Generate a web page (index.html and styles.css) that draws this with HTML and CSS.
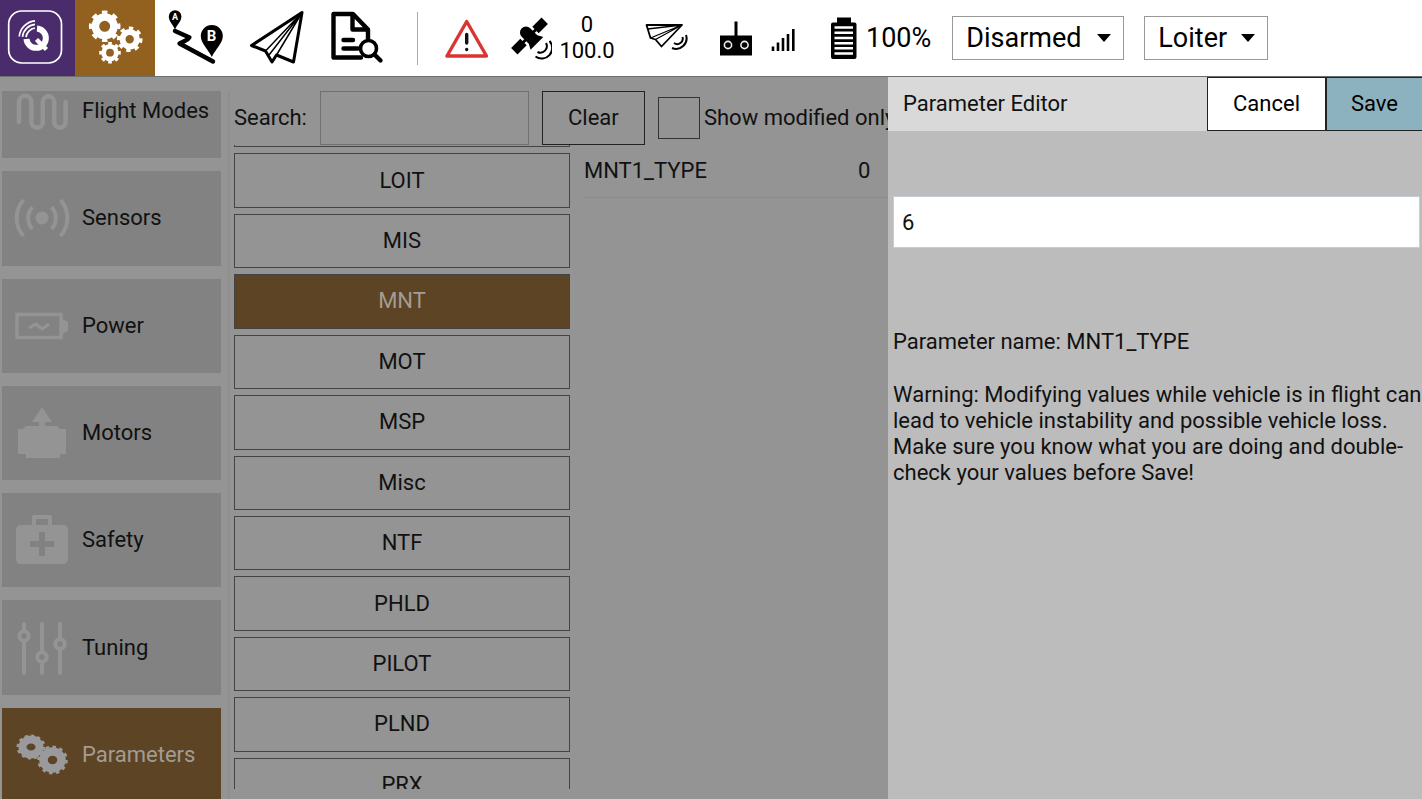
FILE: index.html
```html
<!DOCTYPE html>
<html lang="en">
<head>
    <meta charset="UTF-8">
    <meta name="viewport" content="width=device-width, initial-scale=1.0">
    <title>Vehicle Setup - Parameters</title>
    <link rel="stylesheet" href="styles.css">
</head>
<body>
<header class="toolbar">
    <button class="tool tool-logo" aria-label="Application menu">
        <svg width="75" height="76" viewBox="0 0 75 76" fill="none" stroke="#fff">
            <rect x="8.7" y="11" width="52.8" height="52" rx="13" stroke-width="1.7"/>
            <path d="M37 28.5A9.7 9.7 0 1 1 26.5 39" stroke-width="6"/>
            <path d="M36.5 39.5L46.5 49.5" stroke-width="4.5"/>
            <path d="M19.2 36.5A17.5 17.5 0 0 1 35 20.8M22.5 36.8A14 14 0 0 1 35 24.3M26 37.2A10.5 10.5 0 0 1 35 28" stroke-width="1.7"/>
        </svg>
    </button>
    <button class="tool tool-active" aria-label="Vehicle setup">
        <svg width="80" height="76" viewBox="75 0 80 76" fill="none" stroke="#fff">
            <circle cx="104.7" cy="26.3" r="9.3" stroke-width="7.6"/>
            <circle cx="104.7" cy="26.3" r="13.8" stroke-width="4" pathLength="16" stroke-dasharray="1 1" stroke-dashoffset="0.5"/>
            <circle cx="129.7" cy="39.3" r="7.2" stroke-width="6"/>
            <circle cx="129.7" cy="39.3" r="11" stroke-width="3.6" pathLength="16" stroke-dasharray="1 1" stroke-dashoffset="0.2"/>
            <circle cx="110" cy="52.7" r="6.3" stroke-width="4.8"/>
            <circle cx="110" cy="52.7" r="9.2" stroke-width="3.2" pathLength="16" stroke-dasharray="1 1" stroke-dashoffset="0.5"/>
        </svg>
    </button>
    <button class="tool" aria-label="Plan flight">
        <svg width="80" height="76" viewBox="155 0 80 76">
            <path d="M175 31L189.5 37.5Q190 39 179.5 43.5L213 61.5" fill="none" stroke="#000" stroke-width="4.4" stroke-linecap="round" stroke-linejoin="round"/>
            <path d="M175 29.5C173 24.5 168.8 21.5 168.8 16.5a6.3 6.3 0 0 1 12.6 0C181.4 21.5 177 24.5 175 29.5z"/>
            <path d="M211.8 57C208 49 200.8 43.5 200.8 36a11 11 0 0 1 22 0C222.8 43.5 215.5 49 211.8 57z"/>
            <text x="175" y="20" class="pin-text pin-small">A</text>
            <text x="211.5" y="41" class="pin-text">B</text>
        </svg>
    </button>
    <button class="tool" aria-label="Fly view">
        <svg width="80" height="76" viewBox="235 0 80 76" fill="none" stroke="#000" stroke-linejoin="round">
            <path d="M302 12.5L251.5 45.5L265.5 51L272 62L276.5 55L293.5 62z" stroke-width="3"/>
            <path d="M302 12.5L265.5 51M302 12.5L269 55M302 12.5L276.5 55" stroke-width="1.5"/>
        </svg>
    </button>
    <button class="tool" aria-label="Analyze tools">
        <svg width="80" height="76" viewBox="315 0 80 76" fill="none" stroke="#000" stroke-width="4.4" stroke-linejoin="round" stroke-linecap="round">
            <path d="M361 57.5H333.5V14H353L368 29.5V39M352.5 15V29.5H368"/>
            <path d="M343.5 40H353M343.5 48.5H358"/>
            <circle cx="368.5" cy="48.5" r="8" stroke-width="3.6"/>
            <path d="M374.5 54.5L380.5 60.5"/>
        </svg>
    </button>
    <span class="separator"></span>
    <svg class="warning" width="44" height="40" viewBox="445 16 44 40" fill="none" stroke-linecap="round" stroke-linejoin="round">
        <path d="M466.7 19.5L447 54H486.5z" stroke="#d93632" stroke-width="3.4"/>
        <path d="M466.7 32.5V41M466.7 47.5V47.6" stroke="#111" stroke-width="3.4"/>
    </svg>
    <div class="gps">
        <svg width="42" height="44" viewBox="510 15 42 44">
            <g transform="rotate(-45 529.5 35)">
                <path d="M523.5 30a6 6 0 0 1 12 0V40l3 5.500h-18l3-5.500z"/>
                <path d="M508 30.500h13v9h-13zM538 30.500h13v9h-13zM520 33.500h19v3h-19z"/>
            </g>
            <g fill="none" stroke="#000" stroke-width="2">
                <path d="M546 42A6.500 6.500 0 0 1 537.500 51M549.500 40A10.500 10.500 0 0 1 535.500 55.500"/>
            </g>
        </svg>
        <div class="gps-values"><span>0</span><span>100.0</span></div>
    </div>
    <svg class="telemetry" width="44" height="30" viewBox="645 24 44 30" fill="none" stroke="#000" stroke-width="1.8" stroke-linejoin="round">
        <path d="M646.5 26H682L661.5 47.5L655.5 40.5L650.5 39z"/>
        <path d="M682 26L647.5 30M682 26L650.5 39M682 26L655.5 40.5" stroke-width="1.3"/>
        <path d="M682.5 38A5.5 5.5 0 0 1 674 44M686 36A10.500 10.500 0 0 1 672 49" stroke-width="2"/>
    </svg>
    <svg class="rc" width="76" height="36" viewBox="720 17 76 36">
        <path d="M720 32.5h14.5V18.5h3V32.5H752V52.5H720z"/>
        <g fill="none" stroke="#eee" stroke-width="1.6">
            <circle cx="728" cy="42" r="3.6"/>
            <circle cx="744.5" cy="42" r="3.6"/>
        </g>
        <path d="M773 48V43.5M778 48V39.5M783 48V35M788 48V31M793.3 48V26" stroke="#000" stroke-width="2.6"/>
    </svg>
    <div class="battery">
        <svg width="28" height="44" viewBox="830 14 28 44">
            <path d="M837 15.5h14v5h3.5q2 0 2 2V55q0 2-2 2H833q-2 0-2-2V22.5q0-2 2-2h4z"/>
            <path d="M834.5 25.5h18.5M834.5 30.7h18.5M834.5 36h18.5M834.5 41.2h18.5M834.5 46.3h18.5M834.5 51.5h18.5" stroke="#fff" stroke-width="2.6"/>
        </svg>
        <span>100%</span>
    </div>
    <div class="picker picker-arm">
        <select aria-label="Arm state"><option>Disarmed</option><option>Armed</option></select>
        <svg width="14" height="8" viewBox="0 0 14 8"><path d="M0 0H14L7 8z"/></svg>
    </div>
    <div class="picker picker-mode">
        <select aria-label="Flight mode"><option>Loiter</option><option>Auto</option></select>
        <svg width="14" height="8" viewBox="0 0 14 8"><path d="M0 0H14L7 8z"/></svg>
    </div>
</header>

<main class="setup">
    <nav class="sidebar">
        <div class="sidebar-list">
            <button>
                <svg width="56" height="56" viewBox="0 0 56 56" fill="none" stroke="currentColor" stroke-width="4.5" stroke-linecap="round">
                    <path d="M4 36V16a6.2 6.2 0 0 1 12.4 0V36a5.7 5.7 0 0 0 11.4 0V16a5.7 5.7 0 0 1 11.4 0V36a5.7 5.7 0 0 0 11.4 0V16" transform="translate(1 3)"/>
                </svg>
                Flight Modes
            </button>
            <button>
                <svg width="56" height="56" viewBox="0 0 56 56" fill="none" stroke="currentColor" stroke-width="4">
                    <circle cx="28" cy="28" r="6.5" fill="currentColor" stroke="none"/>
                    <path d="M18.5 17a16 16 0 0 0 0 22M37.5 17a16 16 0 0 1 0 22M9.5 10a27 27 0 0 0 0 36M46.5 10a27 27 0 0 1 0 36"/>
                </svg>
                Sensors
            </button>
            <button>
                <svg width="56" height="56" viewBox="0 0 56 56" fill="none" stroke="currentColor" stroke-width="3.5">
                    <path d="M3 16.5H47V39.5H3z"/>
                    <path d="M48 21l6 3v9l-6 3z" fill="currentColor" stroke="none"/>
                    <path d="M15 30l7-4 6 5 7-5" stroke-width="3"/>
                </svg>
                Power
            </button>
            <button>
                <svg width="56" height="56" viewBox="0 0 56 56" fill="currentColor">
                    <path d="M28 2l10 15h-7v4h12l3 3h6v25h-6v4H12v-4H4V24h5l3-3h13v-4h-7z"/>
                </svg>
                Motors
            </button>
            <button>
                <svg width="56" height="56" viewBox="0 0 56 56" fill="currentColor">
                    <path fill-rule="evenodd" d="M18 13V5q0-2 2-2h16q2 0 2 2v8h11q5 0 5 5v29q0 5-5 5H7q-5 0-5-5V18q0-5 5-5zM22 13h12V7H22zM25 20v9h-9v6h9v9h6v-9h9v-6h-9v-9z"/>
                </svg>
                Safety
            </button>
            <button>
                <svg width="56" height="56" viewBox="0 0 56 56" fill="none" stroke="currentColor" stroke-width="4" stroke-linecap="round">
                    <path d="M10 4v6M10 21V53M28 4V31M28 43V53M46 4V18M46 30V53"/>
                    <circle cx="10" cy="16" r="4.7"/>
                    <circle cx="28" cy="37" r="4.7"/>
                    <circle cx="46" cy="24" r="4.7"/>
                </svg>
                Tuning
            </button>
            <button class="active">
                <svg width="56" height="56" viewBox="0 0 56 56" fill="none" stroke="currentColor">
                    <ellipse cx="17" cy="20" rx="8.5" ry="7.5" stroke-width="8"/>
                    <ellipse cx="17" cy="20" rx="13" ry="11" stroke-width="3" pathLength="24" stroke-dasharray="1 1"/>
                    <ellipse cx="38.5" cy="33" rx="9" ry="8.5" stroke-width="8.5"/>
                    <ellipse cx="38.5" cy="33" rx="13.8" ry="13" stroke-width="3" pathLength="24" stroke-dasharray="1 1"/>
                </svg>
                Parameters
            </button>
        </div>
    </nav>

    <section class="params">
        <div class="filter">
            <label for="search">Search:</label>
            <input type="text" id="search" class="search">
            <button class="clear">Clear</button>
            <input type="checkbox" id="modified">
            <label for="modified">Show modified only</label>
        </div>
        <div class="params-body">
            <div class="groups">
                <div class="groups-list">
                    <button aria-label="LOG"></button>
                    <button>LOIT</button>
                    <button>MIS</button>
                    <button class="active">MNT</button>
                    <button>MOT</button>
                    <button>MSP</button>
                    <button>Misc</button>
                    <button>NTF</button>
                    <button>PHLD</button>
                    <button>PILOT</button>
                    <button>PLND</button>
                    <button>PRX</button>
                </div>
            </div>
            <table class="values">
                <tr><th scope="row">MNT1_TYPE</th><td>0</td></tr>
            </table>
        </div>
    </section>

    <aside class="editor" role="dialog" aria-labelledby="editor-title">
        <div class="editor-header">
            <h1 id="editor-title">Parameter Editor</h1>
            <button class="cancel">Cancel</button>
            <button class="save">Save</button>
        </div>
        <div class="editor-body">
            <input type="text" value="6" aria-label="Parameter value">
            <p>Parameter name: MNT1_TYPE</p>
            <p>Warning: Modifying values while vehicle is in flight can lead to vehicle instability and possible vehicle loss. Make sure you know what you are doing and double-check your values before Save!</p>
        </div>
    </aside>
</main>
</body>
</html>
```
FILE: styles.css
```css
* {
    box-sizing: border-box;
}
body {
    margin: 0;
    height: 100vh;
    display: flex;
    flex-direction: column;
    overflow: hidden;
    font-family: Roboto, sans-serif;
    font-size: 22px;
    line-height: 26px;
    color: #111;
    background-color: #949494;
}
button, input, select {
    font: inherit;
    color: inherit;
    margin: 0;
    padding: 0;
    border-radius: 0;
}
svg {
    display: block;
    flex: none;
}

/* Toolbar */
.toolbar {
    flex: none;
    display: flex;
    align-items: center;
    height: 77px;
    border-bottom: 1px solid #6c6f6c;
    background-color: #fff;
    color: #000;
}
.tool {
    border: none;
    background: none;
}
.tool-logo {
    background-color: #4a2c6d;
}
.tool-active {
    background-color: #926120;
}
.pin-text {
    fill: #fff;
    font-size: 15px;
    font-weight: bold;
    text-anchor: middle;
}
.pin-small {
    font-size: 9px;
}
.separator {
    width: 1px;
    height: 53px;
    margin: 0 27px 0 22px;
    background-color: #aaa;
}
.gps {
    display: flex;
    align-items: center;
    gap: 8px;
    margin: 0 31px 0 21px;
}
.gps-values {
    display: flex;
    flex-direction: column;
    align-items: center;
    width: 54px;
}
.rc {
    margin: 0 34px 0 31px;
}
.battery {
    display: flex;
    align-items: center;
    gap: 8px;
    margin-right: 21px;
    font-size: 27px;
}
.picker {
    position: relative;
    height: 44px;
    margin-right: 20px;
    font-size: 27px;
}
.picker select {
    width: 100%;
    height: 100%;
    padding-left: 13px;
    border: 1px solid #999;
    background-color: #fff;
    appearance: none;
}
.picker svg {
    position: absolute;
    top: 18px;
    right: 13px;
    pointer-events: none;
}
.picker-arm {
    width: 172px;
}
.picker-mode {
    width: 124px;
}

/* Setup page */
.setup {
    position: relative;
    flex: 1;
    min-height: 0;
    display: flex;
    padding-top: 14px;
}
.sidebar {
    width: 230px;
    flex: none;
    overflow: hidden;
    padding: 0 7px 0 2px;
    border-right: 2px solid #8f8f8f;
}
.sidebar-list {
    display: flex;
    flex-direction: column;
    gap: 13px;
    height: calc(100% + 30px);
    margin-top: -27px;
}
.sidebar button {
    flex: 1;
    display: flex;
    align-items: center;
    gap: 12px;
    padding: 0 12px;
    border: none;
    background-color: #828282;
    text-align: left;
    white-space: nowrap;
}
.sidebar svg {
    color: #949494;
}
.sidebar .active {
    background-color: #5c4424;
    color: #a49c94;
}
.sidebar .active svg {
    color: #9a9a9c;
}
.params {
    flex: 1;
    min-width: 0;
    display: flex;
    flex-direction: column;
    padding: 0 0 10px 4px;
}
.filter {
    flex: none;
    display: flex;
    align-items: center;
    height: 54px;
    white-space: nowrap;
}
.search {
    width: 209px;
    height: 54px;
    margin: 0 13px;
    border: 1px solid #707070;
    background-color: #949494;
}
.clear {
    width: 103px;
    height: 54px;
    border: 1px solid #222;
    background-color: #949494;
}
.filter input[type="checkbox"] {
    width: 42px;
    height: 42px;
    margin: 0 4px 0 13px;
    border: 1px solid #333;
    appearance: none;
}
.params-body {
    flex: 1;
    min-height: 0;
    display: flex;
    gap: 14px;
}
.groups {
    width: 336px;
    flex: none;
    overflow: hidden;
}
.groups-list {
    display: flex;
    flex-direction: column;
    gap: 6px;
    height: calc(100% + 75px);
    margin-top: -52px;
}
.groups button {
    flex: 1;
    border: 1px solid #444;
    background-color: #949494;
}
.groups .active {
    background-color: #5c4424;
    color: #a49c94;
}
.values {
    width: 100%;
    height: 53px;
    border-collapse: collapse;
}
.values th, .values td {
    padding: 0;
    border-bottom: 1px solid #8b8b8b;
    font-weight: normal;
    text-align: left;
}
.values th {
    width: 274px;
}

/* Parameter editor */
.editor {
    position: absolute;
    top: 0;
    right: 0;
    bottom: 0;
    width: 534px;
    background-color: #bcbcbc;
}
.editor-header {
    display: flex;
    align-items: center;
    height: 54px;
    padding-left: 15px;
    background-color: #d9d9d9;
}
.editor h1 {
    flex: 1;
    margin: 0;
    font-size: 22px;
    font-weight: normal;
}
.editor-header button {
    height: 54px;
    border: 1px solid #222;
    color: #000;
}
.cancel {
    width: 119px;
    background-color: #fff;
}
.editor-header .save {
    width: 96px;
    border-width: 1px 0 1px 1px;
    background-color: #8db2bf;
}
.editor-body {
    padding: 65px 0 0 5px;
}
.editor-body input {
    width: calc(100% - 2px);
    height: 52px;
    margin-bottom: 81px;
    padding: 0 8px;
    border: 1px solid #c4ccd6;
    background-color: #fff;
}
.editor-body p {
    margin: 0 0 27px;
}
```
